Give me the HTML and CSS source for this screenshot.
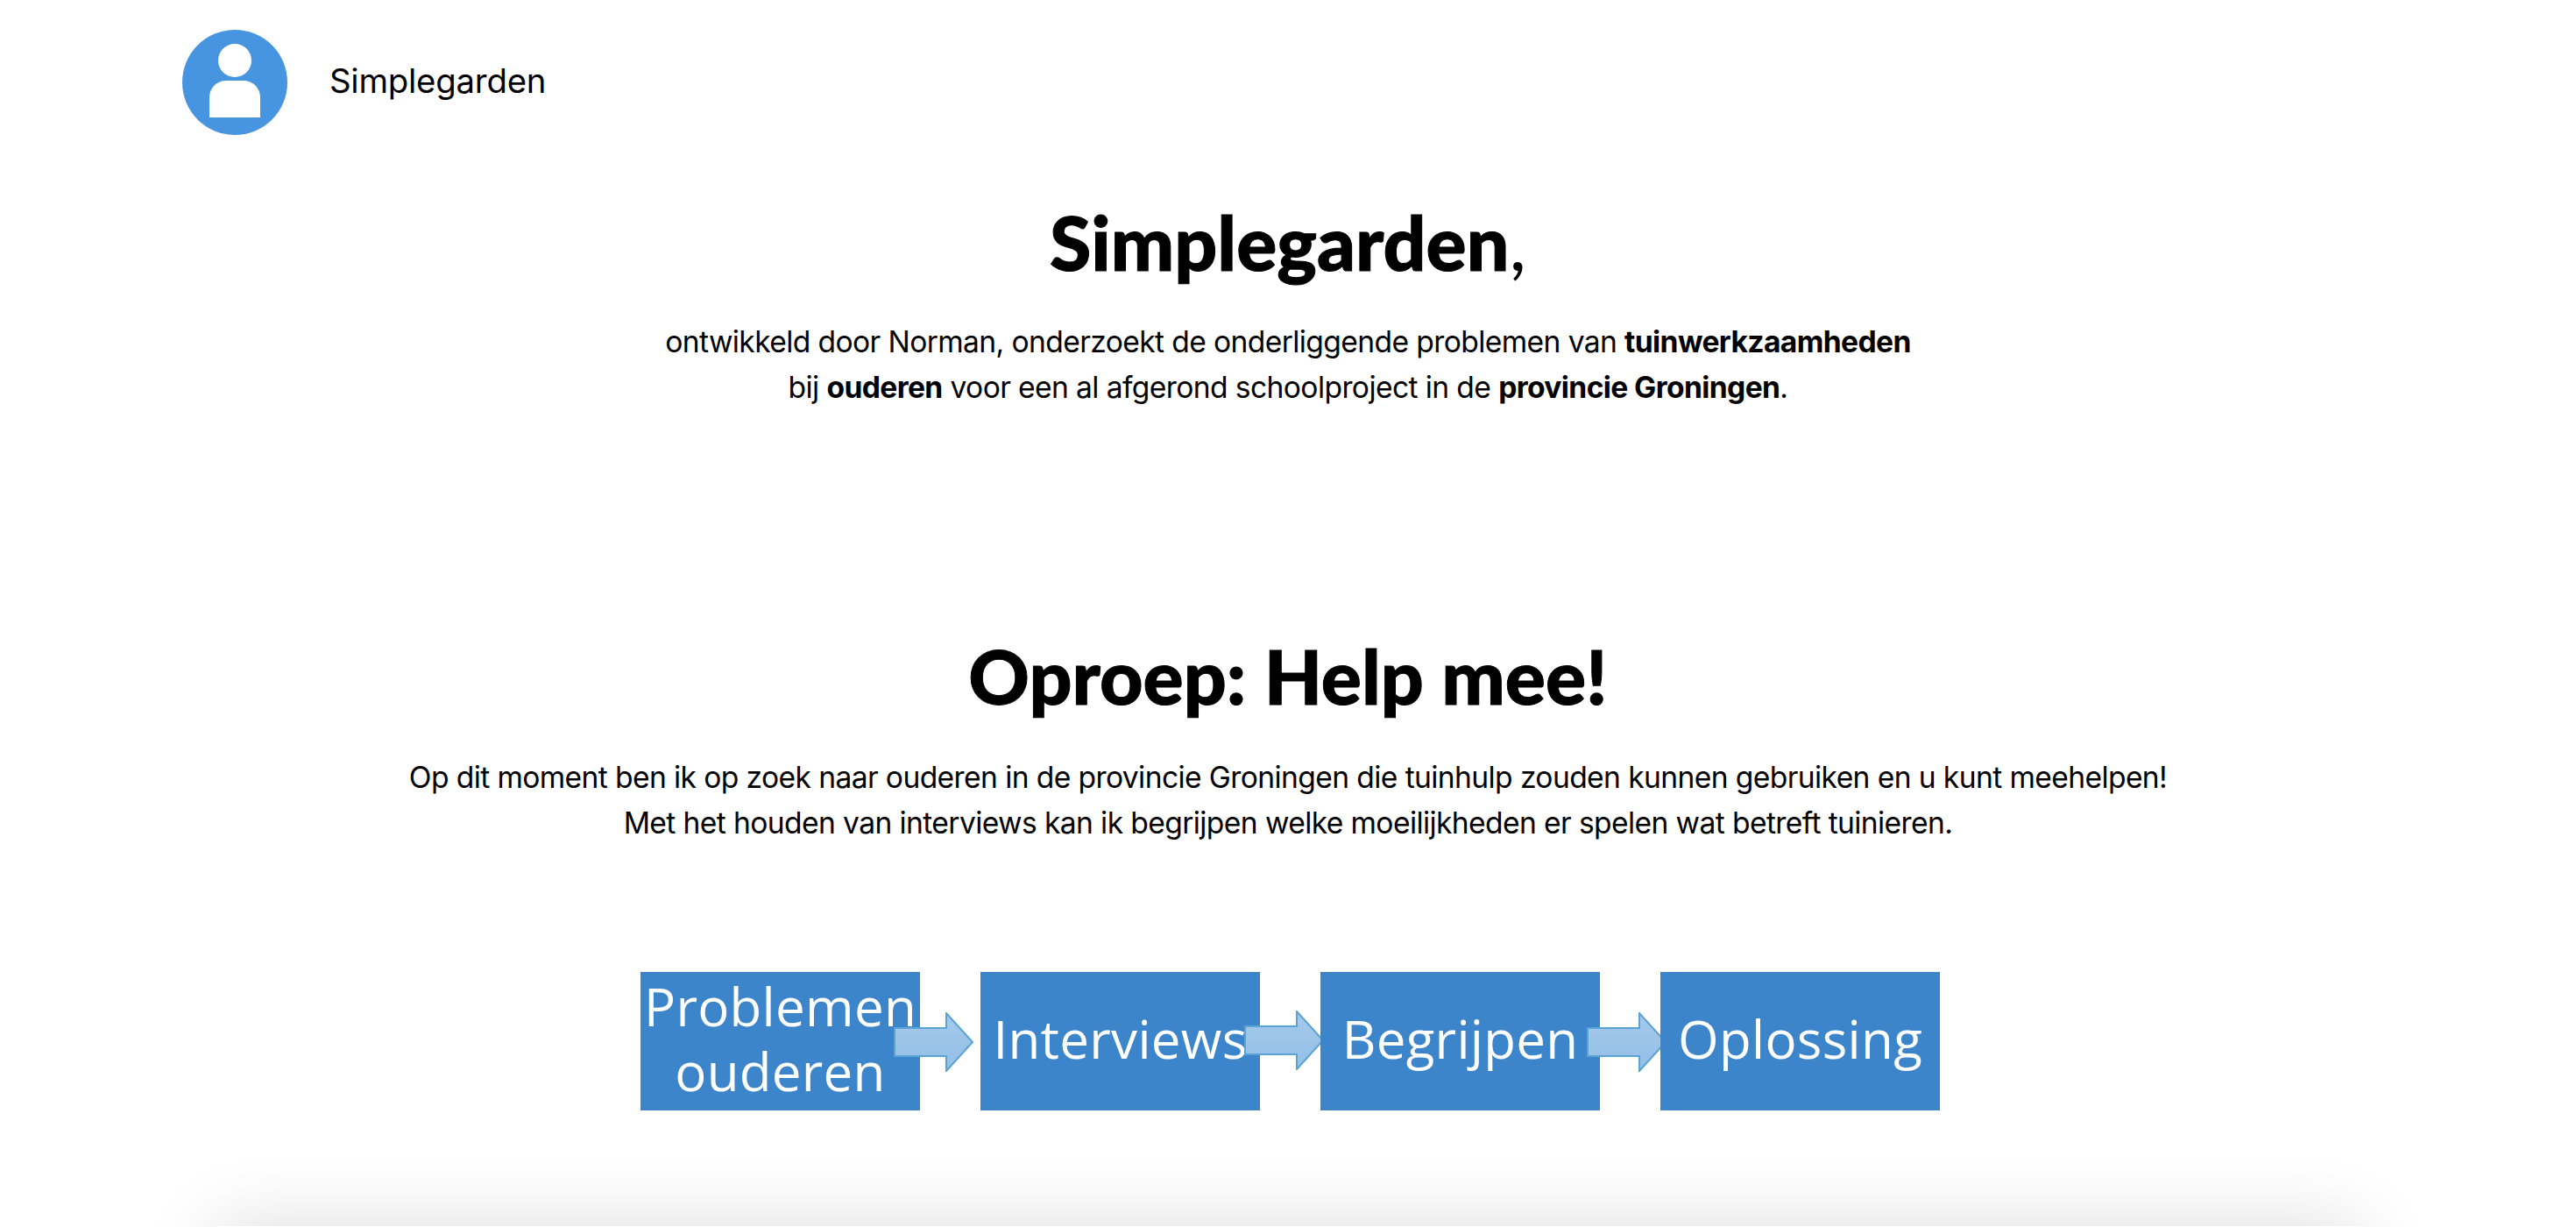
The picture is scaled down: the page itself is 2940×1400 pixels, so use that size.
FILE: index.html
```html
<!DOCTYPE html>
<html>
  <head>
    <title>Simplegarden</title>
    <link rel="stylesheet" href="styles.css">
  </head>
  <body>
    <div class="page">
      <div class="header">
        <svg class="avatar" viewBox="0 0 120 120">
          <circle cx="60" cy="60" r="60" fill="#4794e0" />
          <circle cx="60" cy="35" r="19" fill="#fff" />
          <path d="M31 100V77a19 19 0 0 1 19-19h20a19 19 0 0 1 19 19v23z" fill="#fff" />
        </svg>
        <span class="brand">Simplegarden</span>
      </div>

      <div class="intro">
        <h1>Simplegarden<span class="comma">,</span></h1>
        <p>
          ontwikkeld door Norman, onderzoekt de onderliggende problemen van <b>tuinwerkzaamheden</b><br>
          bij <b>ouderen</b> voor een al afgerond schoolproject in de <b>provincie Groningen</b>.
        </p>
      </div>

      <div class="call">
        <h2>Oproep: Help mee!</h2>
        <p>
          Op dit moment ben ik op zoek naar ouderen in de provincie Groningen die tuinhulp zouden kunnen gebruiken en u kunt meehelpen!<br>
          Met het houden van interviews kan ik begrijpen welke moeilijkheden er spelen wat betreft tuinieren.
        </p>
      </div>

      <div class="steps">
        <div class="step">
          Problemen<br>ouderen
          <svg class="arrow arrow-first" viewBox="0 0 92 68">
            <defs>
              <linearGradient id="arrowFill" x1="0" y1="0" x2="0" y2="1">
                <stop offset="0" stop-color="#a5c9ea" />
                <stop offset="1" stop-color="#93bfe8" />
              </linearGradient>
            </defs>
            <path d="M1 18H60V1L90 34 60 67V50H1z" fill="url(#arrowFill)" stroke="#5aa3d3" stroke-width="2" />
          </svg>
        </div>
        <div class="step">
          Interviews
          <svg class="arrow arrow-second" viewBox="0 0 92 68">
            <path d="M1 18H60V1L90 34 60 67V50H1z" fill="url(#arrowFill)" stroke="#5aa3d3" stroke-width="2" />
          </svg>
        </div>
        <div class="step">
          Begrijpen
          <svg class="arrow arrow-third" viewBox="0 0 92 68">
            <path d="M1 18H60V1L90 34 60 67V50H1z" fill="url(#arrowFill)" stroke="#5aa3d3" stroke-width="2" />
          </svg>
        </div>
        <div class="step">Oplossing</div>
      </div>

      <div class="next-card"></div>
    </div>
  </body>
</html>
```

FILE: styles.css
```css
html,
body {
  margin: 0;
  background-color: #fff;
  color: #000;
}

.page {
  height: 1400px;
  overflow: hidden;
  font-family: "Inter", "Liberation Sans", sans-serif;
}

.header {
  display: flex;
  align-items: center;
  gap: 48px;
  padding: 34px 0 0 208px;
}

.avatar {
  width: 120px;
  height: 120px;
}

.brand {
  position: relative;
  top: -2px;
  font-size: 38.3px;
  letter-spacing: -0.2px;
}

.intro,
.call {
  text-align: center;
}

h1,
h2 {
  margin: 0;
  font-family: "Lato", sans-serif;
  font-weight: 900;
  line-height: 1.2;
  -webkit-text-stroke: 1px #000;
}

h1 {
  margin-top: 70px;
  font-size: 86px;
}

h2 {
  font-size: 86px;
}

.comma {
  font-weight: 400;
  -webkit-text-stroke: 0;
}

p {
  margin: 0;
  font-size: 33.6px;
  line-height: 52px;
  letter-spacing: -0.6px;
}

.intro p {
  margin-top: 37px;
}

.call {
  margin-top: 251px;
}

.call p {
  margin-top: 39px;
}

.steps {
  display: flex;
  gap: 69px;
  margin: 144px 0 0 731px;
}

.step {
  position: relative;
  display: flex;
  align-items: center;
  justify-content: center;
  box-sizing: border-box;
  width: 319px;
  height: 158px;
  padding-bottom: 6px;
  background-color: #3d85cb;
  color: #fff;
  font-family: "Open Sans", sans-serif;
  font-size: 60px;
  line-height: 74px;
  letter-spacing: 0.3px;
  text-align: center;
}

.arrow {
  position: absolute;
  top: 46px;
  width: 92px;
  height: 68px;
}

.arrow-first {
  right: -62px;
}

.arrow-second {
  top: 44px;
  right: -74px;
}

.arrow-third {
  right: -77px;
}

.next-card {
  height: 400px;
  margin: 132px 247px 0;
  background-color: #fff;
  box-shadow: 0 0 80px rgba(0, 0, 0, 0.14);
}
```
